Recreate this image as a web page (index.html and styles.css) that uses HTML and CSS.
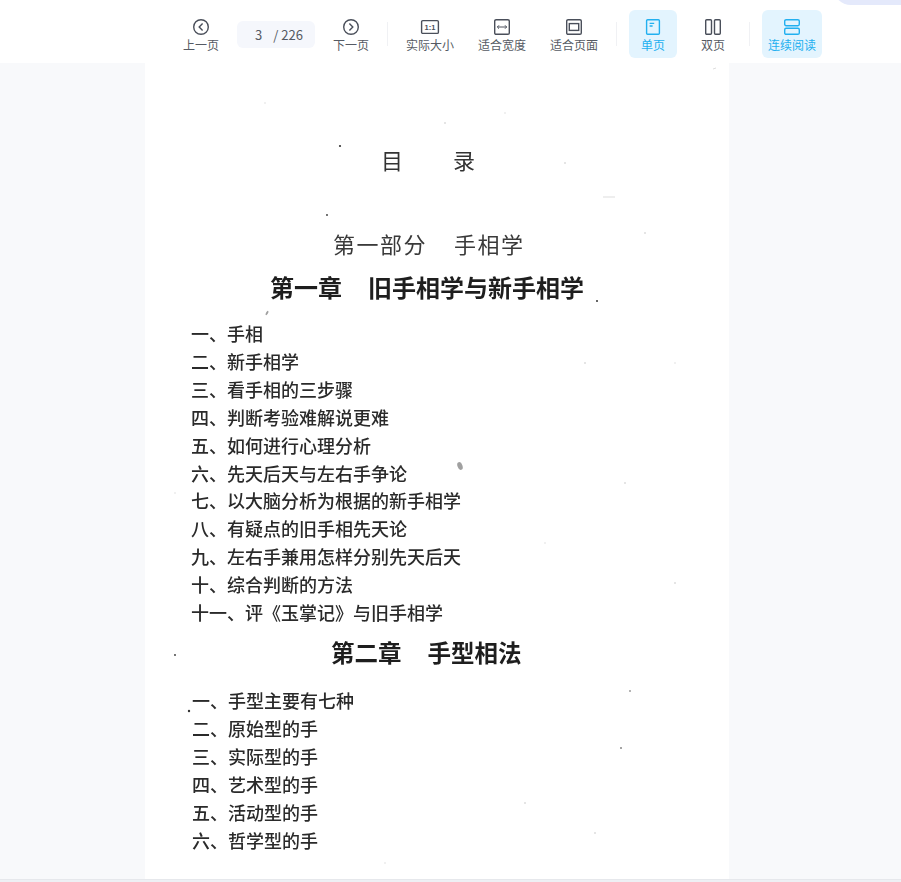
FILE: index.html
```html
<!DOCTYPE html>
<html lang="zh-CN">
<head>
<meta charset="utf-8">
<title>目录</title>
<link rel="stylesheet" href="styles.css">
</head>
<body>
<div class="blob"></div>
<header class="toolbar">
  <div class="tool">
    <svg class="icon" viewBox="0 0 16 16"><circle cx="8" cy="8" r="7.3"/><path d="M9.6 4.6 6.2 8l3.4 3.4"/></svg>
    <span>上一页</span>
  </div>
  <div class="pager"><span class="cur">3</span><span>/ 226</span></div>
  <div class="tool">
    <svg class="icon" viewBox="0 0 16 16"><circle cx="8" cy="8" r="7.3"/><path d="M6.4 4.6 9.8 8l-3.4 3.4"/></svg>
    <span>下一页</span>
  </div>
  <i class="divider"></i>
  <div class="tool first">
    <svg class="icon wide" viewBox="0 0 20 16"><rect x="1.6" y="1.6" width="16.8" height="12.8" rx="1.2"/><text x="10" y="11" class="ratio">1:1</text></svg>
    <span>实际大小</span>
  </div>
  <div class="tool spaced">
    <svg class="icon" viewBox="0 0 16 16"><rect x=".7" y=".7" width="14.6" height="14.6" rx="1.4"/><path class="thin" d="M3.5 8h9M5 6.3 3.3 8 5 9.7M11 6.3 12.7 8 11 9.7"/></svg>
    <span>适合宽度</span>
  </div>
  <div class="tool spaced">
    <svg class="icon" viewBox="0 0 16 16"><rect x=".7" y=".7" width="14.6" height="14.6" rx="1.4"/><rect x="3.3" y="4.6" width="9.4" height="6.8"/></svg>
    <span>适合页面</span>
  </div>
  <i class="divider after-fit"></i>
  <div class="tool active">
    <svg class="icon" viewBox="0 0 16 16"><rect x="1.6" y=".7" width="12.8" height="14.6" rx="1"/><path d="M4.6 4.4h4.6M4.6 7h3"/></svg>
    <span>单页</span>
  </div>
  <div class="tool">
    <svg class="icon" viewBox="0 0 16 16"><rect x=".7" y=".7" width="5.8" height="14.6" rx="1"/><rect x="9.5" y=".7" width="5.8" height="14.6" rx="1"/></svg>
    <span>双页</span>
  </div>
  <i class="divider"></i>
  <div class="tool active long">
    <svg class="icon" viewBox="0 0 16 16"><rect x=".7" y=".7" width="14.6" height="6" rx="1.4"/><rect x=".7" y="9.3" width="14.6" height="6" rx="1.4"/></svg>
    <span>连续阅读</span>
  </div>
</header>
<main class="viewer">
  <article class="sheet">
    <svg class="specks" viewBox="0 0 584 816">
      <circle cx="195" cy="83" r="1.1"/><circle cx="182" cy="152" r=".9"/><circle cx="452" cy="238" r="1"/>
      <ellipse cx="122" cy="250" rx="1" ry="2.4" transform="rotate(30 122 250)" class="soft"/>
      <ellipse cx="315" cy="403" rx="2.5" ry="4" transform="rotate(-20 315 403)" class="soft"/>
      <circle cx="30" cy="592" r=".9"/><circle cx="44" cy="648" r="1.2"/>
      <circle cx="476" cy="685" r=".8"/><circle cx="485" cy="628" r=".7"/>
      <g class="faint">
        <circle cx="300" cy="60" r="1"/><circle cx="420" cy="100" r="1"/><circle cx="360" cy="50" r=".8"/>
        <circle cx="500" cy="170" r="1"/><circle cx="530" cy="300" r=".8"/><circle cx="440" cy="300" r="1"/>
        <circle cx="480" cy="420" r="1"/><circle cx="400" cy="480" r=".8"/><circle cx="530" cy="520" r="1"/>
        <circle cx="380" cy="740" r="1"/><circle cx="450" cy="770" r="1"/><circle cx="240" cy="800" r=".8"/>
        <circle cx="60" cy="780" r=".8"/><circle cx="30" cy="430" r=".8"/><circle cx="120" cy="40" r=".8"/>
      </g>
      <path class="line" d="M458 134h12M568 6l3-1"/>
    </svg>
    <h1 class="title"><span>目</span><span>录</span></h1>
    <h2 class="part"><span>第一部分</span><span>手相学</span></h2>
    <h3 class="chapter one"><span>第一章</span><span>旧手相学与新手相学</span></h3>
    <ul class="toc">
      <li>一、手相</li>
      <li>二、新手相学</li>
      <li>三、看手相的三步骤</li>
      <li>四、判断考验难解说更难</li>
      <li>五、如何进行心理分析</li>
      <li>六、先天后天与左右手争论</li>
      <li>七、以大脑分析为根据的新手相学</li>
      <li>八、有疑点的旧手相先天论</li>
      <li>九、左右手兼用怎样分别先天后天</li>
      <li>十、综合判断的方法</li>
      <li>十一、评《玉掌记》与旧手相学</li>
    </ul>
    <h3 class="chapter two"><span>第二章</span><span>手型相法</span></h3>
    <ul class="toc second">
      <li>一、手型主要有七种</li>
      <li>二、原始型的手</li>
      <li>三、实际型的手</li>
      <li>四、艺术型的手</li>
      <li>五、活动型的手</li>
      <li>六、哲学型的手</li>
    </ul>
  </article>
</main>
<footer class="bottom"></footer>
</body>
</html>
```
FILE: styles.css
```css
* { box-sizing: border-box; margin: 0; padding: 0; }
html, body { height: 100%; overflow: hidden; }
body {
  display: flex;
  flex-direction: column;
  height: 882px;
  background: #f8f9fb;
  font-family: "Noto Sans CJK SC", "Noto Sans", sans-serif;
}
.blob {
  position: absolute;
  z-index: 2;
  top: -30px;
  right: -10px;
  width: 78px;
  height: 35px;
  background: #e4e9fb;
  border-radius: 0 0 0 18px;
}
.toolbar {
  flex: none;
  height: 63px;
  display: flex;
  align-items: center;
  padding: 5px 0 0 177px;
  background: #fff;
}
.tool {
  width: 48px;
  height: 48px;
  display: flex;
  flex-direction: column;
  align-items: center;
  padding-top: 9px;
  gap: 1px;
  flex: none;
  border-radius: 6px;
  font-size: 12px;
  line-height: 17px;
  color: #555a63;
  white-space: nowrap;
}
.icon {
  width: 16px;
  height: 16px;
  flex: none;
  fill: none;
  stroke: #4a4f5a;
  stroke-width: 1.4;
}
.icon.wide { width: 20px; }
.icon .thin { stroke-width: 1; }
.ratio {
  font-size: 7.5px;
  font-weight: 700;
  font-family: "Liberation Sans", sans-serif;
  text-anchor: middle;
  fill: #4a4f5a;
  stroke: none;
}
.pager {
  width: 78px;
  height: 27px;
  margin: 0 12px;
  padding-left: 18px;
  display: flex;
  align-items: center;
  gap: 11px;
  background: #f5f7fc;
  border-radius: 6px;
  font-size: 13px;
  color: #555a63;
  flex: none;
}
.divider {
  width: 1px;
  height: 24px;
  margin: 0 12px;
  background: #f0f1f4;
  flex: none;
}
.tool.first { margin-left: 6px; }
.tool.spaced { margin-left: 24px; }
.divider.after-fit { margin-left: 18px; }
.tool.active { background: #e3f4fe; color: #22b0f0; }
.tool.active .icon { stroke: #22b0f0; }
.tool.active + .tool { margin-left: 12px; }
.tool.long { width: 60px; }
.viewer {
  flex: 1;
  min-height: 0;
  padding-left: 145px;
  overflow: hidden;
}
.sheet {
  position: relative;
  width: 584px;
  height: 816px;
  overflow: hidden;
  background: #fff;
  color: #2a2a2a;
  padding-top: 80px;
}
.specks {
  position: absolute;
  inset: 0;
  width: 584px;
  height: 816px;
}
.specks circle { fill: #333; }
.specks .soft { fill: #a0a0a0; }
.specks .faint circle { fill: #ddd; }
.specks .line { stroke: #ddd; fill: none; }
.title, .part, .chapter { display: flex; font-weight: 400; white-space: nowrap; filter: blur(.3px); }
.title {
  padding-left: 236px;
  gap: 50px;
  font-size: 22px;
  line-height: 32px;
  color: #333;
}
.part {
  margin-top: 52px;
  padding-left: 188px;
  gap: 27px;
  font-size: 22px;
  line-height: 32px;
  letter-spacing: 1.5px;
  color: #3a3a3a;
}
.chapter { font-weight: 700; color: #1e1e1e; }
.chapter.one {
  margin-top: 11px;
  padding-left: 125px;
  gap: 26px;
  font-size: 24px;
  line-height: 34px;
}
.chapter.two {
  margin-top: 8px;
  padding-left: 186px;
  gap: 26px;
  font-size: 23.5px;
  line-height: 34px;
}
.toc {
  list-style: none;
  margin-top: 16px;
  padding-left: 46px;
  font-size: 18px;
  line-height: 27.9px;
  font-weight: 500;
  white-space: nowrap;
  filter: blur(.3px);
}
.toc.second { margin-top: 17px; padding-left: 47px; line-height: 28px; }
.bottom {
  flex: none;
  height: 3px;
  background: #eef0f4;
  border-top: 1px solid #e6e8ec;
}
```
